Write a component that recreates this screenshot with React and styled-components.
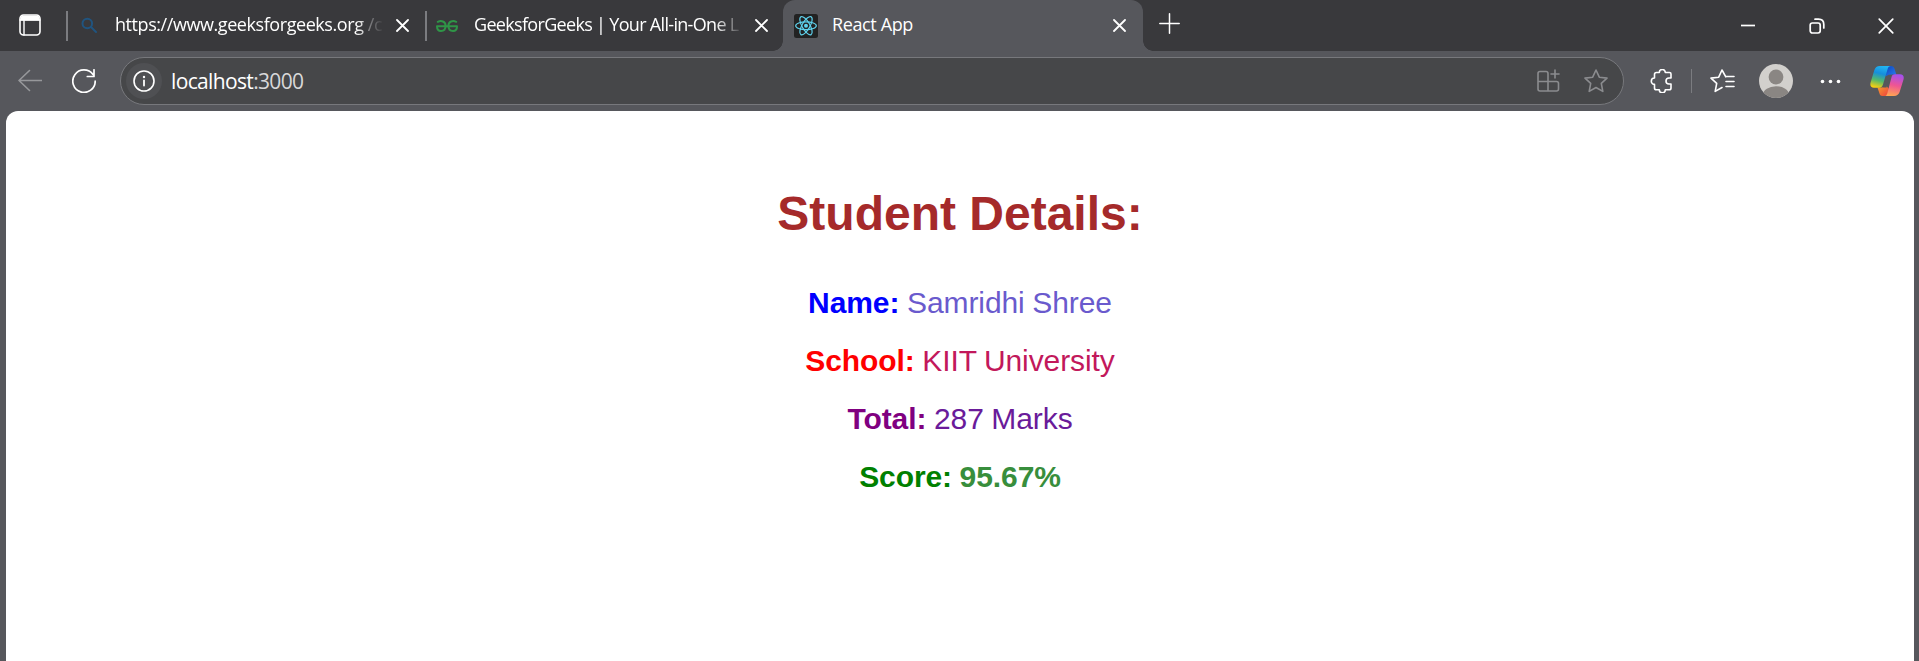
import React from "react";
import styled, { createGlobalStyle } from "styled-components";

const GlobalStyle = createGlobalStyle`
  html, body { margin: 0; padding: 0; }
  body { background: #56575c; overflow: hidden; }
  * { box-sizing: border-box; }
`;

const Window = styled.div`
  display: flex;
  flex-direction: column;
  height: 661px;
  background: #56575c;
  font-family: "Open Sans", "Noto Sans", sans-serif;
`;

const TitleBar = styled.header`
  display: flex;
  align-items: center;
  height: 51px;
  flex: none;
  background: #39393c;
  color: #fff;
`;

const Icon = styled.svg`
  display: block;
  flex: none;
  fill: none;
  stroke: ${(p) => p.$color || "#fff"};
  stroke-width: ${(p) => p.$weight || 1.6};
  stroke-linecap: round;
  stroke-linejoin: round;
  margin-left: ${(p) => p.$gap || 0}px;
`;

const Divider = styled.div`
  flex: none;
  width: ${(p) => p.$w || 1.5}px;
  height: ${(p) => p.$h || 30}px;
  margin-left: ${(p) => p.$gap || 0}px;
  background: #7b7c80;
`;

const Tab = styled.div`
  display: flex;
  align-items: center;
  flex: none;
  width: ${(p) => p.$width}px;
  height: 51px;
  padding-left: ${(p) => p.$pad}px;
`;

const ActiveTab = styled(Tab)`
  position: relative;
  background: #56575c;
  border-radius: 12px 12px 0 0;

  &::before,
  &::after {
    content: "";
    position: absolute;
    bottom: 0;
    width: 10px;
    height: 10px;
  }
  &::before {
    left: -10px;
    background: radial-gradient(circle at 0 0, transparent 9.5px, #56575c 10px);
  }
  &::after {
    right: -10px;
    background: radial-gradient(circle at 100% 0, transparent 9.5px, #56575c 10px);
  }
`;

const TabTitle = styled.div`
  flex: none;
  width: ${(p) => p.$width}px;
  margin-left: ${(p) => p.$gap}px;
  overflow: hidden;
  white-space: pre;
  font-size: 18px;
  line-height: 24px;
  letter-spacing: ${(p) => p.$track || 0}px;
  padding-bottom: 4px;
  ${(p) => p.$fade && "mask-image: linear-gradient(to right, #000 calc(100% - 28px), transparent);"}
`;

const Dim = styled.span`
  color: #c5c5c7;
`;

const WindowControls = styled.div`
  display: flex;
  align-items: center;
  margin-left: auto;
  padding-right: 25.5px;
  gap: 53px;
`;

const Toolbar = styled.div`
  display: flex;
  align-items: center;
  height: 60px;
  flex: none;
  padding-left: 18px;
`;

const AddressBar = styled.div`
  display: flex;
  align-items: center;
  width: 1504px;
  height: 48px;
  margin-left: 24px;
  padding: 0 15px 0 5px;
  border: 1.5px solid #77787c;
  border-radius: 24px;
  background: #464749;
`;

const SiteInfo = styled.div`
  display: flex;
  align-items: center;
  justify-content: center;
  flex: none;
  width: 36px;
  height: 36px;
  border-radius: 50%;
  background: #4f5053;
`;

const Address = styled.div`
  flex: 1;
  margin-left: 9px;
  color: #fff;
  font-size: 21px;
  line-height: 28px;
  letter-spacing: -0.65px;
`;

const Port = styled.span`
  color: #d8d8d9;
`;

const Page = styled.main`
  flex: 1;
  margin: 0 5px 0 6px;
  padding-top: 76px;
  border-radius: 12px 12px 0 0;
  background: #fff;
  text-align: center;
  font-family: "Liberation Sans", Arial, sans-serif;
`;

const Heading = styled.h1`
  margin: 0 0 45px;
  color: brown;
  font-size: 48px;
  line-height: 54px;
`;

const Detail = styled.p`
  margin: 0 0 24px;
  font-size: 30px;
  line-height: 34px;
  letter-spacing: -0.08px;
  word-spacing: -0.7px;
`;

const Label = styled.strong`
  color: ${(p) => p.$color};
`;

const Value = styled.span`
  color: ${(p) => p.$color};
  font-weight: ${(p) => (p.$bold ? 700 : 400)};
`;

const Cross = ({ gap, size = 13, weight = 1.8 }) => (
  <Icon $gap={gap} $weight={weight} width={size} height={size} viewBox="0 0 13 13">
    <path d="M1 1l11 11M12 1L1 12" />
  </Icon>
);

const GeeksLogo = () => (
  <Icon $color="#2f9547" $weight="2" width="22" height="12" viewBox="0 0 22 12" strokeLinecap="butt">
    <path d="M1.8 1.8C5 .4 9.6 1 9.6 5.8 9.6 9.5 7.3 11 5 11 2.5 11 1 9 1 6.2H21C21 9 19.5 11 17 11 14.700 11 12.400 9.500 12.400 5.800 12.400 1 17 .4 20.200 1.800" />
  </Icon>
);

const ReactLogo = () => (
  <Icon $color="#5fd3ee" $weight="1.2" width="24" height="24" viewBox="0 0 24 24">
    <rect width="24" height="24" rx="2.500" fill="#222" stroke="none" />
    <circle cx="12" cy="11.700" r="2" fill="#5fd3ee" stroke="none" />
    <ellipse cx="12" cy="11.700" rx="10.300" ry="3.900" />
    <ellipse cx="12" cy="11.700" rx="10.300" ry="3.900" transform="rotate(60 12 11.700)" />
    <ellipse cx="12" cy="11.700" rx="10.300" ry="3.900" transform="rotate(120 12 11.700)" />
  </Icon>
);

const Copilot = () => (
  <Icon $gap={29} width="34" height="32" viewBox="0 0 34 32">
    <defs>
      <linearGradient id="cpLeft" x1="0.600" y1="0" x2="0.350" y2="1">
        <stop offset="0" stopColor="#22b5f2" />
        <stop offset=".35" stopColor="#168fdc" />
        <stop offset=".68" stopColor="#55b96a" />
        <stop offset="1" stopColor="#f5cf12" />
      </linearGradient>
      <linearGradient id="cpRight" x1="0.600" y1="0" x2="0.400" y2="1">
        <stop offset="0" stopColor="#a650ed" />
        <stop offset=".5" stopColor="#ef5593" />
        <stop offset="1" stopColor="#ffa552" />
      </linearGradient>
      <linearGradient id="cpTop" x1="0" y1="0" x2="1" y2="1">
        <stop offset="0" stopColor="#0b45bd" />
        <stop offset="1" stopColor="#2d7ef0" />
      </linearGradient>
      <linearGradient id="cpBottom" x1="0" y1="0" x2="1" y2="1">
        <stop offset="0" stopColor="#f6a52c" />
        <stop offset="1" stopColor="#ee3e3e" />
      </linearGradient>
    </defs>
    <g stroke="none">
      <path d="M15 1h6c2 0 3 1 3.600 3l1.700 5.500H22c-2 0-3 .8-3.600 2.500L15 10z" fill="url(#cpTop)" />
      <path d="M7.500 22.500H12c2 0 3-1 3.600-2.500L19 24l-1.500 5c-.6 1.500-1.500 2-3 2h-2c-2 0-2.700-1-3.200-3z" fill="url(#cpBottom)" />
      <path d="M10 1h11c-1.800 0-2.700.8-3.300 2.800l-4.800 16c-.6 2-1.700 2.900-3.700 2.900H4c-3.200 0-4.200-2.300-3.400-5.300L4.300 5.200C5.100 2.500 7 1 10 1z" fill="url(#cpLeft)" />
      <path d="M24.800 9.300H30c3.200 0 4.300 2.300 3.500 5.300l-3.800 12.200c-.8 2.700-2.700 4.200-5.700 4.200H14c1.800 0 2.700-.8 3.300-2.800l4.200-16c.5-2 1.500-2.900 3.300-2.900z" fill="url(#cpRight)" />
      <path d="M16.500 11.500Q17.200 9.600 20.500 9.600L18.500 16 16.500 22.600H13.200z" fill="#56575c" />
    </g>
  </Icon>
);

const details = [
  { label: "Name:", value: "Samridhi Shree", color: "blue", tone: "#6a5acd" },
  { label: "School:", value: "KIIT University", color: "red", tone: "#c2185b" },
  { label: "Total:", value: "287 Marks", color: "purple", tone: "#6a1b9a" },
  { label: "Score:", value: "95.67%", color: "green", tone: "#388e3c", bold: true },
];

export default function App() {
  return (
    <Window>
      <GlobalStyle />
      <TitleBar>
        <Icon $gap={19} $weight="1.6" width="22" height="24" viewBox="0 0 22 24">
          <rect x="1" y="1" width="20" height="20" rx="3.500" />
          <path d="M1.500 6.500V4.500Q1.500 1.500 4.500 1.500h13Q20.500 1.500 20.500 4.500v2z" fill="#fff" stroke="none" />
          <path d="M5 6v15M1 6h20" strokeWidth="1.400" />
        </Icon>
        <Divider $gap={25} />
        <Tab $width={357.5} $pad={13.5}>
          <Icon $color="#20547f" $weight="2" width="16" height="18" viewBox="0 0 16 18">
            <circle cx="6.300" cy="6.500" r="4.800" />
            <path d="M10 10l5 5" />
          </Icon>
          <TabTitle $gap={18} $width={269} $track={-0.43} $fade>
            https://www.geeksforgeeks.org <Dim>/c</Dim>
          </TabTitle>
          <Cross gap={12} />
        </Tab>
        <Divider />
        <Tab $width={356.5} $pad={9.5}>
          <GeeksLogo />
          <TabTitle $gap={16} $width={269} $track={-0.68} $fade>
            GeeksforGeeks | Your All-in-One L
          </TabTitle>
          <Cross gap={12} />
        </Tab>
        <ActiveTab $width={360} $pad={11}>
          <ReactLogo />
          <TabTitle $gap={14} $width={268} $track={-0.38}>
            React App
          </TabTitle>
          <Cross gap={13} />
        </ActiveTab>
        <Icon $gap={16} $weight="1.500" width="21" height="25" viewBox="0 0 21 25">
          <path d="M.8 10.500h19.400M10.500 .8v19.400" />
        </Icon>
        <WindowControls>
          <Icon $weight="1.700" width="16" height="16" viewBox="0 0 16 16">
            <path d="M1 7.500h14" strokeLinecap="butt" />
          </Icon>
          <Icon $weight="1.700" width="16" height="16" viewBox="0 0 16 16">
            <rect x="1.200" y="5" width="10" height="10" rx="2.200" />
            <path d="M6 1.200h3.500Q14.800 1.200 14.800 6.500v3.500" />
          </Icon>
          <Cross size={16} weight={1.4} />
        </WindowControls>
      </TitleBar>

      <Toolbar>
        <Icon $color="#97989b" width="24" height="24" viewBox="0 0 24 24">
          <path d="M23.500 11.500H1M11.500 1.500L1 11.500l10.500 10" />
        </Icon>
        <Icon $gap={30} $weight="1.700" width="24" height="24" viewBox="0 0 24 24">
          <path d="M21 5.500A11.200 11.200 0 1 0 23.200 12M22 .8v6.700h-6.700" />
        </Icon>
        <AddressBar>
          <SiteInfo>
            <Icon $weight="1.600" width="22" height="22" viewBox="0 0 22 22">
              <circle cx="11" cy="11" r="10" />
              <path d="M11 10.500v5" strokeWidth="1.800" />
              <circle cx="11" cy="7" r="1.200" fill="#fff" stroke="none" />
            </Icon>
          </SiteInfo>
          <Address>
            localhost<Port>:3000</Port>
          </Address>
          <Icon $color="#8b8c8f" width="23" height="24" viewBox="0 0 23 24">
            <path d="M11 22V4.500q0-2-2-2H3q-2 0-2 2V20q0 2 2 2h16.500q2 0 2-2v-5.500q0-2-2-2H1M18 1v8M14 5h8" />
          </Icon>
          <Icon $gap={24} $color="#8b8c8f" width="24" height="24" viewBox="0 0 24 24">
            <path d="M12 1l3.300 7.200 7.700.9-5.700 5.300 1.500 8L12 18.500l-6.800 3.900 1.500-8L1 9.100l7.700-.9z" />
          </Icon>
        </AddressBar>
        <Icon $gap={26} width="22" height="24" viewBox="0 0 22 24">
          <path d="M4.500 5.500q0-2 2-2h2.800a3 3 0 0 1 6 0H19.500q1.500 0 1.500 1.500v4h-2a3 3 0 0 0 0 6h2V19q0 1.800-1.800 1.800h-3.900a3 3 0 0 1-6 0H6.300q-1.800 0-1.800-1.800v-3.600a3.200 3.200 0 0 1 0-6.400z" />
        </Icon>
        <Divider $gap={18.5} $h={24} />
        <Icon $gap={17.5} width="25" height="24" viewBox="0 0 25 24">
          <path d="M15.800 7.800L12 1 8.700 8.200 1 9.100l5.700 5.300-1.500 8 6.800-3.900M16 7.500h8M16 12.500h8M16 17.500h8" />
        </Icon>
        <Icon $gap={24} width="34" height="34" viewBox="0 0 34 34">
          <clipPath id="avatar"><circle cx="17" cy="17" r="17" /></clipPath>
          <g clipPath="url(#avatar)" stroke="none">
            <rect width="34" height="34" fill="#d2d0cd" />
            <circle cx="17" cy="13" r="7.400" fill="#8a8683" />
            <ellipse cx="17" cy="31" rx="13" ry="8.800" fill="#8a8683" />
          </g>
        </Icon>
        <Icon $gap={27} width="21" height="6" viewBox="0 0 21 6">
          <g fill="#fff" stroke="none">
            <circle cx="2.500" cy="3.500" r="1.800" />
            <circle cx="10.500" cy="3.500" r="1.800" />
            <circle cx="18.500" cy="3.500" r="1.800" />
          </g>
        </Icon>
        <Copilot />
      </Toolbar>

      <Page>
        <Heading>Student Details:</Heading>
        {details.map((d) => (
          <Detail key={d.label}>
            <Label $color={d.color}>{d.label}</Label>{" "}
            <Value $color={d.tone} $bold={d.bold}>{d.value}</Value>
          </Detail>
        ))}
      </Page>
    </Window>
  );
}
